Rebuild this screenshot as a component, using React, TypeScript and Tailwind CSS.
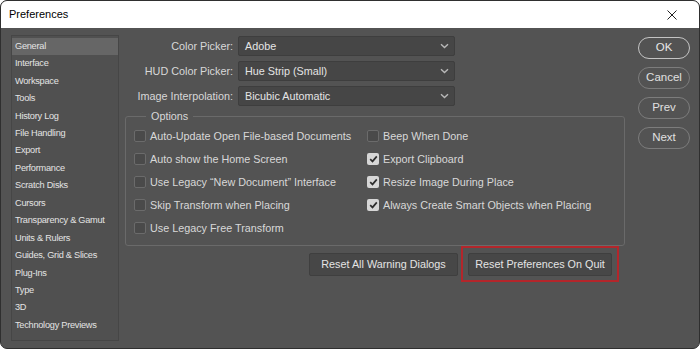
import React from "react";

const sidebarItems = [
  "General",
  "Interface",
  "Workspace",
  "Tools",
  "History Log",
  "File Handling",
  "Export",
  "Performance",
  "Scratch Disks",
  "Cursors",
  "Transparency & Gamut",
  "Units & Rulers",
  "Guides, Grid & Slices",
  "Plug-Ins",
  "Type",
  "3D",
  "Technology Previews",
];

const selects = [
  { label: "Color Picker:", value: "Adobe" },
  { label: "HUD Color Picker:", value: "Hue Strip (Small)" },
  { label: "Image Interpolation:", value: "Bicubic Automatic" },
];

const leftOpts = [
  { label: "Auto-Update Open File-based Documents", checked: false },
  { label: "Auto show the Home Screen", checked: false },
  { label: "Use Legacy \u201CNew Document\u201D Interface", checked: false },
  { label: "Skip Transform when Placing", checked: false },
  { label: "Use Legacy Free Transform", checked: false },
];

const rightOpts = [
  { label: "Beep When Done", checked: false },
  { label: "Export Clipboard", checked: true },
  { label: "Resize Image During Place", checked: true },
  { label: "Always Create Smart Objects when Placing", checked: true },
];

function Chevron() {
  return (
    <svg width="9" height="6" viewBox="0 0 9 6" className="shrink-0">
      <path d="M1 1.2 L4.5 4.6 L8 1.2" fill="none" stroke="#b8b8b8" strokeWidth="1.4" />
    </svg>
  );
}

function Check({ checked }: { checked: boolean }) {
  return (
    <div
      className={
        checked
          ? "w-[12px] h-[12px] rounded-[2px] bg-[#d6d6d6] flex items-center justify-center shrink-0"
          : "w-[12px] h-[12px] rounded-[2px] bg-[#4a4a4a] border border-[#6b6b6b] shrink-0"
      }
    >
      {checked && (
        <svg width="9" height="8" viewBox="0 0 9 8">
          <path d="M1.2 4.2 L3.5 6.4 L7.8 1.4" fill="none" stroke="#2e2e2e" strokeWidth="1.7" />
        </svg>
      )}
    </div>
  );
}

function Opt({ label, checked }: { label: string; checked: boolean }) {
  return (
    <div className="flex items-center gap-[4px] h-[23px]">
      <Check checked={checked} />
      <span className="whitespace-nowrap">{label}</span>
    </div>
  );
}

function Pill({ children, primary }: { children: React.ReactNode; primary?: boolean }) {
  return (
    <div
      className={
        primary
          ? "w-[52px] h-[22px] rounded-full border-[1.5px] border-[#c4c4c4] flex items-center justify-center text-[#e8e8e8]"
          : "w-[52px] h-[22px] rounded-full border border-[#7c7c7c] flex items-center justify-center text-[#e0e0e0]"
      }
    >
      {children}
    </div>
  );
}

export default function App() {
  return (
    <div className="w-[700px] h-[349px] bg-white">
      <div
        className="w-[700px] h-[349px] rounded-[7px] overflow-hidden border border-[#2f2f2f] bg-[#535353] flex flex-col"
        style={{ fontFamily: '"Liberation Sans", Arial, sans-serif' }}
      >
        <div className="h-[27px] bg-white flex items-center justify-between pl-[8px] pr-[22px] shrink-0">
          <span className="text-[11px] text-black">Preferences</span>
          <svg width="10" height="10" viewBox="0 0 10 10">
            <path d="M0.5 0.5 L9.5 9.5 M9.5 0.5 L0.5 9.5" stroke="#222" strokeWidth="1" />
          </svg>
        </div>
        <div className="flex flex-1 pt-[7px] pl-[10px]">
          <div className="w-[108px] h-[306px] bg-[#505050] border border-[#464646] pt-[2px] text-[9.2px] text-[#e4e4e4] tracking-[-0.25px] shrink-0">
            {sidebarItems.map((s, i) => (
              <div
                key={s}
                className={
                  i === 0
                    ? "h-[17.44px] flex items-center pl-[3px] bg-[#666666]"
                    : "h-[17.44px] flex items-center pl-[3px]"
                }
              >
                {s}
              </div>
            ))}
          </div>
          <div className="w-[500px] ml-[6px] flex flex-col text-[10.8px] text-[#d8d8d8]">
            <div className="flex flex-col gap-[5px] pt-[1px]">
              {selects.map((s) => (
                <div key={s.label} className="flex items-center h-[20px]">
                  <div className="w-[113px] text-right pr-[5px] whitespace-nowrap">{s.label}</div>
                  <div className="w-[217px] h-[20px] bg-[#464646] border border-[#3e3e3e] rounded-[2px] flex items-center justify-between pl-[6px] pr-[5px] text-[#e4e4e4]">
                    <span>{s.value}</span>
                    <Chevron />
                  </div>
                </div>
              ))}
            </div>
            <fieldset className="mt-[2px] h-[138px] border border-[#6a6a6a] rounded-[3px] pl-[8px] pr-[8px]">
              <legend className="ml-[12px] px-[5px] text-[#d8d8d8]">Options</legend>
              <div className="flex">
                <div className="w-[233px] flex flex-col">
                  {leftOpts.map((o) => (
                    <Opt key={o.label} {...o} />
                  ))}
                </div>
                <div className="flex flex-col">
                  {rightOpts.map((o) => (
                    <Opt key={o.label} {...o} />
                  ))}
                </div>
              </div>
            </fieldset>
            <div className="flex justify-end items-center pr-[6px] mt-0 gap-[3px]">
              <div className="w-[149px] h-[23px] bg-[#474747] border border-[#3f3f3f] rounded-[2px] flex items-center justify-center text-[#e4e4e4]">
                Reset All Warning Dialogs
              </div>
              <div className="w-[158px] h-[36px] border-2 border-[#b3262b] flex items-center justify-center">
                <div className="w-[144px] h-[23px] bg-[#474747] border border-[#3f3f3f] rounded-[2px] flex items-center justify-center text-[#e4e4e4]">
                  Reset Preferences On Quit
                </div>
              </div>
            </div>
          </div>
          <div className="ml-[13px] pt-[2px] flex flex-col gap-[8px] text-[11.5px]">
            <Pill primary>OK</Pill>
            <Pill>Cancel</Pill>
            <Pill>Prev</Pill>
            <Pill>Next</Pill>
          </div>
        </div>
      </div>
    </div>
  );
}
